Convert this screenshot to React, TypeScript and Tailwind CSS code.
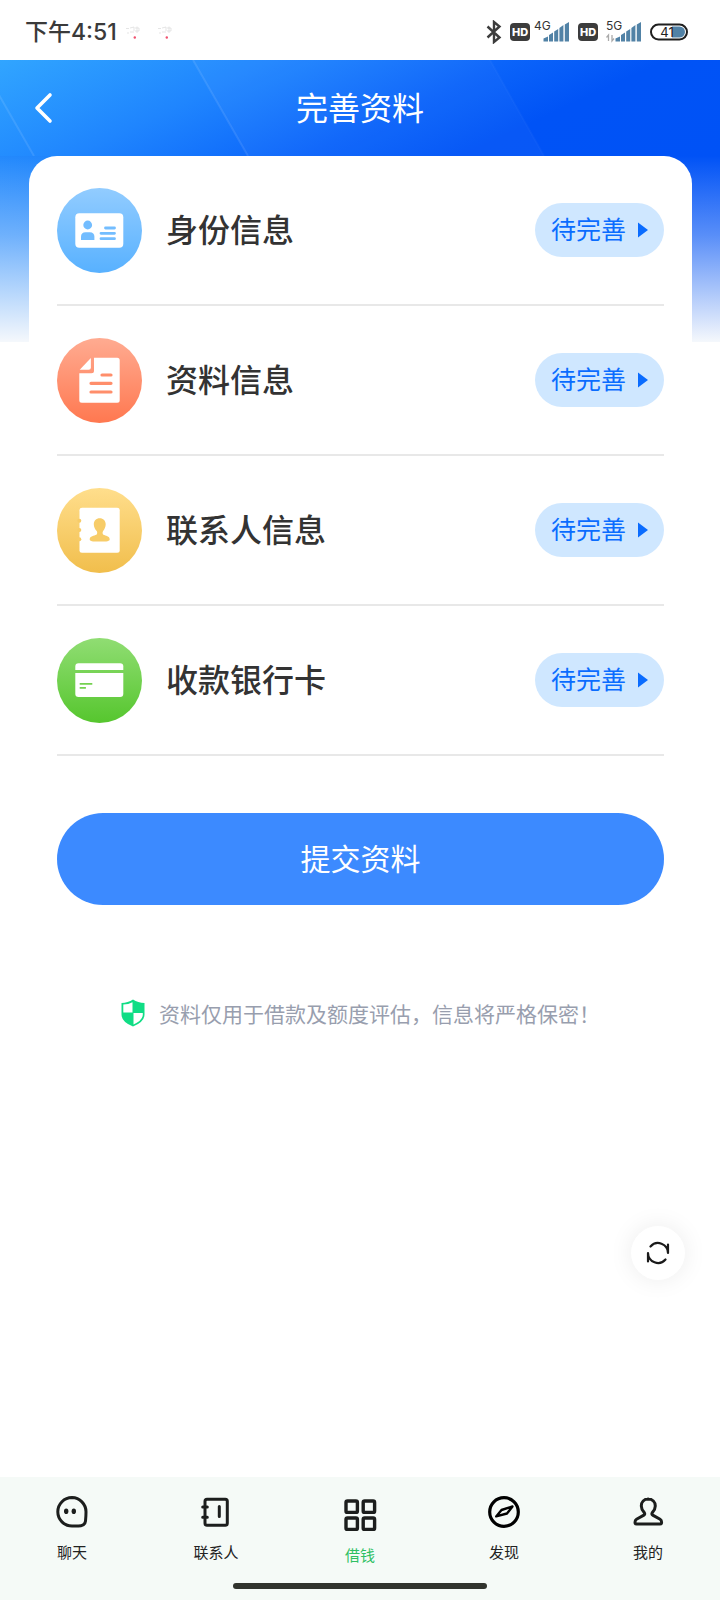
import type { ReactNode } from "react";

const ROWS = [
  { key: "identity", label: "身份信息", icon: <IdentityIcon /> },
  { key: "profile", label: "资料信息", icon: <ProfileIcon /> },
  { key: "contacts", label: "联系人信息", icon: <ContactsIcon /> },
  { key: "bank", label: "收款银行卡", icon: <BankCardIcon /> },
];

const TABS = [
  { key: "chat", label: "聊天", icon: <ChatTabIcon />, active: false },
  { key: "contacts", label: "联系人", icon: <BookTabIcon />, active: false },
  { key: "loan", label: "借钱", icon: <GridTabIcon />, active: true },
  { key: "discover", label: "发现", icon: <CompassTabIcon />, active: false },
  { key: "me", label: "我的", icon: <MeTabIcon />, active: false },
];

function RoundIcon({ id, from, to, children }: { id: string; from: string; to: string; children: ReactNode }) {
  return (
    <svg viewBox="0 0 85 85" className="size-[85px] shrink-0" aria-hidden="true">
      <defs>
        <linearGradient id={id} x1="0" y1="0" x2="0" y2="1">
          <stop offset="0" stopColor={from} />
          <stop offset="1" stopColor={to} />
        </linearGradient>
      </defs>
      <circle cx="42.5" cy="42.5" r="42.5" fill={`url(#${id})`} />
      {children}
    </svg>
  );
}

function IdentityIcon() {
  return (
    <RoundIcon id="identity" from="#92ccff" to="#58b1ff">
      <rect x="18.3" y="25.3" width="48" height="34.5" rx="4" fill="#fff" />
      <g fill="#73bdff">
        <circle cx="30.7" cy="37" r="4.4" />
        <path d="M24 52v-3.2q0-4.6 4.6-4.6h4.2q4.6 0 4.6 4.6V52z" />
      </g>
      <path d="M48.5 40h9M44 45.3h13.5M44 50.7h13.5" stroke="#73bdff" strokeWidth="2.8" strokeLinecap="round" />
    </RoundIcon>
  );
}

function ProfileIcon() {
  return (
    <RoundIcon id="profile" from="#ffab91" to="#ff7850">
      <path d="M37 19.7h23.2q2.5 0 2.5 2.5v40q0 2.5-2.5 2.5H24.8q-2.5 0-2.5-2.5V35.3h12.2q2.5 0 2.5-2.5z" fill="#fff" />
      <path d="M33.9 19.9v9.6q0 2.2-2.2 2.2h-9z" fill="#fff" />
      <path d="M45 37h9M34 45.3h20M34 54h20" stroke="#ff8e6b" strokeWidth="3.2" strokeLinecap="round" />
    </RoundIcon>
  );
}

function ContactsIcon() {
  return (
    <RoundIcon id="contacts" from="#ffde8c" to="#f1be4c">
      <rect x="22.5" y="19.8" width="40.2" height="45" rx="2.5" fill="#fff" />
      <g fill="#f7cc68">
        <circle cx="22.3" cy="32.7" r="2" />
        <circle cx="22.3" cy="42" r="2" />
        <circle cx="22.3" cy="51.3" r="2" />
        <path d="M42.7 30.3c3.6 0 6 2.6 6 6 0 3-1.300 5-2.600 6.800-.8 1.200-.7 3 .3 3.600 2.200 1 6.300 1.200 6.300 4.500 0 1.900-2.400 2.400-10 2.400s-10-.5-10-2.400c0-3.300 4.500-3.500 6.700-4.500 1-.6 1.100-2.400.3-3.600-1.600-1.800-2.900-3.800-2.900-6.800 0-3.400 2.300-6 5.900-6z" />
      </g>
    </RoundIcon>
  );
}

function BankCardIcon() {
  return (
    <RoundIcon id="bank" from="#90dd73" to="#56c62e">
      <path d="M18.3 32v-3.500q0-3.200 3.200-3.200h41.600q3.200 0 3.200 3.200V32z" fill="#fff" />
      <path d="M18.3 35h48v20.800q0 3.200-3.200 3.200H21.500q-3.200 0-3.200-3.200z" fill="#fff" />
      <path d="M22.700 45.800h12.600M22.700 49.800h6.200" stroke="#74d150" strokeWidth="1.700" />
    </RoundIcon>
  );
}

function TabSvg({ children, width = "3" }: { children: ReactNode; width?: string }) {
  return (
    <svg
      viewBox="0 0 36 36"
      className="size-9"
      fill="none"
      stroke="#1c1e1d"
      strokeWidth={width}
      strokeLinecap="round"
      strokeLinejoin="round"
      aria-hidden="true"
    >
      {children}
    </svg>
  );
}

function ChatTabIcon() {
  return (
    <TabSvg>
      <path d="M18 3.600A14.200 14.200 0 0 0 18 32c3.500 0 6.500.1 9-.3 3-.5 4.200-2 4.500-4.700.3-2.800.5-6 .5-9.200A14.200 14.200 0 0 0 18 3.600z" />
      <g fill="#1c1e1d" stroke="none">
        <ellipse cx="12.2" cy="17.300" rx="2.200" ry="2.800" />
        <ellipse cx="19.800" cy="17.300" rx="2.200" ry="2.800" />
      </g>
    </TabSvg>
  );
}

function BookTabIcon() {
  return (
    <TabSvg>
      <rect x="7" y="5.300" width="22.300" height="26" rx="2" />
      <path d="M4.700 13h4.600M4.700 23.300h4.600M21.300 12.500v10" />
    </TabSvg>
  );
}

function GridTabIcon() {
  return (
    <TabSvg width="3.4">
      <rect x="4" y="4" width="11.400" height="11.400" rx="1.500" />
      <rect x="21.200" y="4" width="11.400" height="11.400" rx="1.500" />
      <rect x="4" y="21" width="11.400" height="11.400" rx="1.500" />
      <rect x="21.200" y="21" width="11.400" height="11.400" rx="1.500" />
    </TabSvg>
  );
}

function CompassTabIcon() {
  return (
    <TabSvg width="3.2">
      <circle cx="18" cy="18" r="14.300" stroke="#000" />
      <path d="M10.200 22.400L15.500 16l11-3.500L21 19.500z" stroke="#000" strokeWidth="2.400" />
    </TabSvg>
  );
}

function MeTabIcon() {
  return (
    <TabSvg>
      <path d="M18.300 5c-4.300 0-7 3-7 7 0 3 1.500 5 3 6.600.7.900.6 2-.4 2.500L6.500 25.200c-1 .6-1.500 1.600-1.500 3 0 1.200.5 1.800 1.600 1.800h23.400c1.100 0 1.600-.6 1.600-1.800 0-1.400-.5-2.400-1.500-3l-7.400-4.100c-1-.5-1.100-1.600-.4-2.500 1.500-1.600 3-3.600 3-6.600 0-4-2.700-7-7.400-7z" />
    </TabSvg>
  );
}

function GhostIcon() {
  return (
    <svg viewBox="0 0 16 16" className="size-4" fill="none" aria-hidden="true">
      <path d="M1 4.500h3M2 9h2M5 4l4-1v4M5 8h4M10 4h4v3h-4M12 2.500V9" stroke="#dedede" strokeWidth="0.800" />
      <circle cx="9.800" cy="13.500" r="1.200" fill="#f0506e" />
    </svg>
  );
}

function HdBadge() {
  return (
    <span className="flex h-[18px] w-5 items-center justify-center rounded-[4px] bg-[#3c3c3c] font-[Inter,sans-serif] text-[11px] leading-none font-extrabold text-white">
      HD
    </span>
  );
}

function Signal({ label, arrows }: { label: string; arrows?: boolean }) {
  return (
    <span className="relative block h-6 w-9">
      <span className="absolute top-0 left-0 text-[12px] leading-3 text-[#333] font-[Inter,sans-serif]">{label}</span>
      <svg viewBox="0 0 36 24" className="block h-6 w-9" aria-hidden="true">
        <path
          d="M9.500 21.500v-3l4.500-2v5zM15 21.500v-6.500l4-2.500v9zM20.200 21.500v-10l4-2.500v12.500zM25.400 21.500V8l4-3v16.500zM30.800 21.500V4.500L35 2v19.500z"
          fill="#5182a6"
        />
        {arrows && <path d="M2.500 21v-6l-2 2.500M6 15v6l2-2.500" stroke="#aaa" strokeWidth="1.300" fill="none" />}
      </svg>
    </span>
  );
}

function StatusBar() {
  return (
    <div className="flex h-[60px] items-center justify-between bg-white pt-1 pr-[31px] pl-[25px] text-[#3a3a3a]">
      <div className="flex items-center">
        <span className="text-[23px] leading-8 font-medium font-[Inter,'Noto_Sans_CJK_SC',sans-serif]">下午4:51</span>
        <div className="ml-2 flex gap-4">
          <GhostIcon />
          <GhostIcon />
        </div>
      </div>
      <div className="flex items-center">
        <svg viewBox="0 0 16 24" className="mr-2 h-6 w-4" fill="none" stroke="#3c3c3c" strokeWidth="2.400" aria-hidden="true">
          <path d="M1.500 6.500l12 11L8 22V2l5.500 4.500-12 11" />
        </svg>
        <HdBadge />
        <span className="mr-2 ml-1">
          <Signal label="4G" />
        </span>
        <HdBadge />
        <span className="mr-2 ml-2">
          <Signal label="5G" arrows />
        </span>
        <span className="relative mr-px block h-[18px] w-[38px]">
          <svg viewBox="0 0 38 18" className="block h-[18px] w-[38px]" aria-hidden="true">
            <path d="M22 3.500h7.500a5.500 5.500 0 0 1 0 11H22z" fill="#5182a6" />
            <rect x="1" y="1.500" width="36" height="15" rx="7.500" fill="none" stroke="#1f1f1f" strokeWidth="2" />
          </svg>
          <span className="absolute inset-0 flex items-center justify-center pr-1 text-[13px] leading-none text-[#222] font-[Inter,sans-serif]">
            41
          </span>
        </span>
      </div>
    </div>
  );
}

export default function App() {
  return (
    <div className="relative flex min-h-screen flex-col bg-white font-['Noto_Sans_CJK_SC',sans-serif] text-[#333]">
      <StatusBar />

      <div className="flex-1 bg-[linear-gradient(to_bottom,transparent_34%,rgba(245,248,252,0.36)_62%,#f5f8fc_100%),linear-gradient(to_right,#2389fc,#1478fc_30%,#0054f6_75%,#0052f6)] bg-[length:100%_282px] bg-no-repeat">
        <header className="relative flex h-24 items-center justify-center bg-[linear-gradient(155deg,#31a5ff,#1f85fe_30%,#0b64fa_55%,#0053f6_72%,#0052f6)] pb-1">
          <svg viewBox="0 0 720 96" preserveAspectRatio="none" className="absolute inset-0 size-full" aria-hidden="true">
            <path d="M193 0H490l54 96H248z" fill="#fff" fillOpacity="0.030" />
            <path d="M-20 2l54 94M193 0l55 96" stroke="#fff" strokeOpacity="0.100" strokeWidth="2" />
            <path d="M490 0l54 96" stroke="#fff" strokeOpacity="0.030" strokeWidth="2" />
          </svg>
          <button type="button" aria-label="返回" className="absolute inset-y-0 left-8 flex w-6 items-center justify-center">
            <svg viewBox="0 0 24 32" className="h-8 w-6" fill="none" stroke="#fff" strokeWidth="3.600" strokeLinecap="round" strokeLinejoin="round" aria-hidden="true">
              <path d="M18 3L5 16l13 13" />
            </svg>
          </button>
          <h1 className="relative text-[32px] leading-10 text-white">完善资料</h1>
        </header>

        <main className="mr-7 ml-[29px] rounded-t-[28px] bg-white px-7">
          <ul>
            {ROWS.map((row) => (
              <li key={row.key} className="flex h-[150px] items-center border-b-2 border-[#e8e8e8]">
                {row.icon}
                <span className="ml-6 flex-1 pb-1 text-[32px] leading-10 font-medium">{row.label}</span>
                <button
                  type="button"
                  className="flex h-[54px] items-center rounded-full bg-[#cfe7ff] px-4 text-[25px] leading-8 text-[#0a6cff]"
                >
                  <span className="pb-1">待完善</span>
                  <svg viewBox="0 0 10 16" className="ml-3 h-4 w-[10px]" fill="#0a6cff" aria-hidden="true">
                    <path d="M0 0.500L10 8 0 15.500z" />
                  </svg>
                </button>
              </li>
            ))}
          </ul>

          <button type="button" className="mt-[57px] h-[92px] w-full rounded-full bg-[#3c8aff] pb-1 text-[30px] leading-10 text-white">
            提交资料
          </button>

          <p className="mt-[92px] flex items-center justify-center gap-[14px] text-[21px] leading-8 text-[#989eae]">
            <svg viewBox="0 0 24 28" className="h-7 w-6 shrink-0" aria-hidden="true">
              <path d="M12 0.500q5 3.300 11.500 3.500v11.500Q23.500 23 12 27.500.5 23 .5 15.500V4Q7 3.800 12 .5z" fill="#10dd85" />
              <path d="M11.500 3.200V13.500H2.300V5.600Q7.500 5.300 11.500 3.200z" fill="#fff" />
              <path d="M12.500 14h9.300v1.500q0 5.800-9.300 9.900z" fill="#fff" />
            </svg>
            资料仅用于借款及额度评估，信息将严格保密！
          </p>
        </main>
      </div>

      <button
        type="button"
        aria-label="刷新"
        className="fixed right-[35px] bottom-[320px] flex size-[54px] items-center justify-center rounded-full bg-white shadow-[0_0_24px_rgba(0,0,0,0.08)]"
      >
        <svg viewBox="0 0 24 24" className="size-6" fill="none" stroke="#1a1a1a" strokeWidth="2.200" strokeLinecap="round" aria-hidden="true">
          <path d="M4.500 5.500A10 10 0 0 1 22 12M22 3.500V12M19.500 18.500A10 10 0 0 1 2 12M2 20.500V12" />
        </svg>
      </button>

      <nav className="bg-[#f5faf7] pb-[11px]">
        <div className="grid h-[106px] grid-cols-5">
          {TABS.map((tab) => (
            <a
              key={tab.key}
              href={`#${tab.key}`}
              className={`flex flex-col items-center gap-[10px] text-[15px] leading-6 ${
                tab.active ? "pt-5 text-[#2fbf63]" : "pt-[17px] text-[#222]"
              }`}
            >
              {tab.icon}
              {tab.label}
            </a>
          ))}
        </div>
        <div className="mx-auto h-[6px] w-[254px] rounded-full bg-[#30332d]" />
      </nav>
    </div>
  );
}
